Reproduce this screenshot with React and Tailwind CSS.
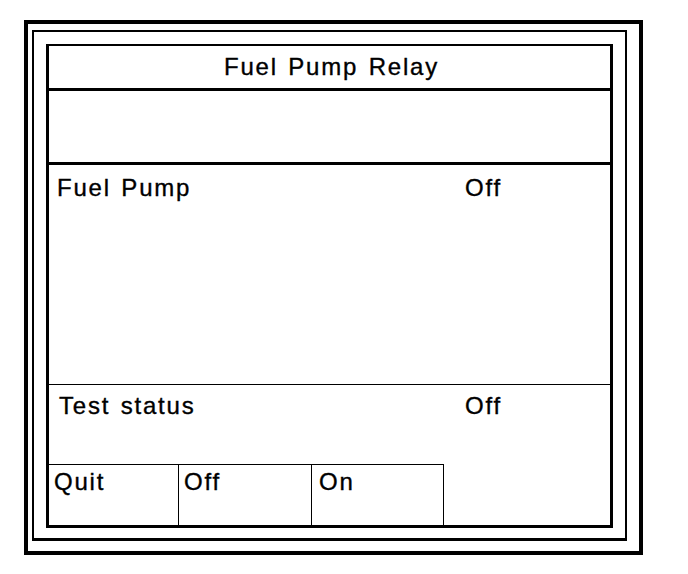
const Cell = ({ children, width, pad }) => (
  <div className={`flex-none h-full border-t border-r border-black pt-[4px] ${width} ${pad}`}>
    {children}
  </div>
)

const App = () => {
  return (
    <div className="w-[688px] h-[574px] bg-white text-black font-['Liberation_Sans',Arial,sans-serif] text-[24px] leading-[26px] tracking-[1.8px] [word-spacing:2px] [-webkit-text-stroke:0.35px_black] pt-[20px] pl-[24px]">
      {/* outer frame */}
      <div className="w-[619px] h-[535px] border-4 border-black pt-[6px] pl-[4px] pr-[12px] pb-[10px]">
        {/* thin frame */}
        <div className="h-full border-2 border-b-[3px] border-black pt-[12px] pl-[12px] pr-[12px] pb-[10px]">
          {/* panel */}
          <div className="h-full flex flex-col border-[3px] border-t-2 border-black">
            <div className="flex-none h-[45px] border-b-[3px] border-black flex items-center justify-center pl-[4px]">
              Fuel Pump Relay
            </div>
            <div className="flex-none h-[74px] border-b-[3px] border-black" />
            <div className="flex-none h-[220px] border-b border-black flex pt-[10px] pl-[8px]">
              <div className="w-[408px]">Fuel Pump</div>
              <div>Off</div>
            </div>
            <div className="flex-none h-[79px] flex pt-[8px] pl-[10px]">
              <div className="w-[406px]">Test status</div>
              <div>Off</div>
            </div>
            <div className="flex-1 flex">
              <Cell width="w-[130px]" pad="pl-[5px]">Quit</Cell>
              <Cell width="w-[133px]" pad="pl-[5px]">Off</Cell>
              <Cell width="w-[132px]" pad="pl-[7px]">On</Cell>
            </div>
          </div>
        </div>
      </div>
    </div>
  )
}

export default App
